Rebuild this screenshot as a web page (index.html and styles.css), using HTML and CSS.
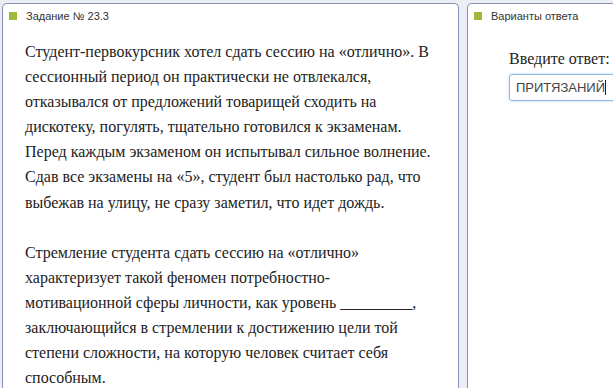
FILE: index.html
```html
<!DOCTYPE html>
<html lang="ru">

<head>
    <meta charset="UTF-8">
    <title>Задание № 23.3</title>
    <link rel="stylesheet" href="styles.css">
</head>

<body>
    <div class="page">
        <div class="panel task">
            <div class="panel-head"><span class="mark"></span>Задание № 23.3</div>
            <div class="task-text">
                <p>Студент-первокурсник хотел сдать сессию на «отлично». В сессионный период он практически не отвлекался, отказывался от предложений товарищей сходить на дискотеку, погулять, тщательно готовился к экзаменам. Перед каждым экзаменом он испытывал сильное волнение. Сдав все экзамены на «5», студент был настолько рад, что выбежав на улицу, не сразу заметил, что идет дождь.</p>
                <p>Стремление студента сдать сессию на «отлично» характеризует такой феномен потребностно-мотивационной сферы личности, как уровень _________, заключающийся в стремлении к достижению цели той степени сложности, на которую человек считает себя способным.</p>
            </div>
        </div>
        <div class="panel answers">
            <div class="panel-head"><span class="mark"></span>Варианты ответа</div>
            <div class="answer-body">
                <label class="answer-label" for="answer">Введите ответ:</label>
                <div class="answer-input"><span id="answer">ПРИТЯЗАНИЙ</span><span class="caret"></span></div>
            </div>
        </div>
    </div>
</body>

</html>
```

FILE: styles.css
```css
body {
    margin: 0;
    background-color: #eceef6;
    overflow: hidden;
}

.page {
    display: flex;
    gap: 8px;
    padding: 3px 0 0 2px;
    height: 388px;
    box-sizing: border-box;
}

.panel {
    background-color: #fff;
    border: 1px solid #8a8fb3;
    border-bottom: none;
    border-radius: 5px 5px 0 0;
}

.task {
    width: 455px;
    flex-shrink: 0;
}

.answers {
    width: 200px;
    flex-shrink: 0;
}

.panel-head {
    display: flex;
    align-items: center;
    height: 24px;
    padding-left: 6px;
    font-family: "Liberation Sans", Arial, sans-serif;
    font-size: 11px;
    color: #333;
}

.mark {
    width: 8px;
    height: 8px;
    background-color: #a2b83c;
    margin-right: 9px;
}

.task-text {
    padding: 11px 0 0 22px;
    font-family: "Liberation Serif", "Times New Roman", serif;
    font-size: 16px;
    line-height: 25.1px;
    color: #222;
}

.task-text p {
    margin: 0 0 25.1px;
    width: 408px;
}

.answer-body {
    padding: 22px 0 0 41px;
    font-family: "Liberation Serif", "Times New Roman", serif;
}

.answer-label {
    display: block;
    font-size: 16px;
    color: #222;
    margin-bottom: 6px;
}

.answer-input {
    display: flex;
    align-items: center;
    width: 140px;
    height: 27px;
    box-sizing: border-box;
    padding-left: 6px;
    border: 1px solid #8fb8e0;
    border-radius: 3px;
    box-shadow: 0 0 3px #b9d6f2;
    font-family: "Liberation Sans", Arial, sans-serif;
    font-size: 13px;
    color: #444;
}

.caret {
    width: 1px;
    height: 15px;
    background-color: #222;
}
```
